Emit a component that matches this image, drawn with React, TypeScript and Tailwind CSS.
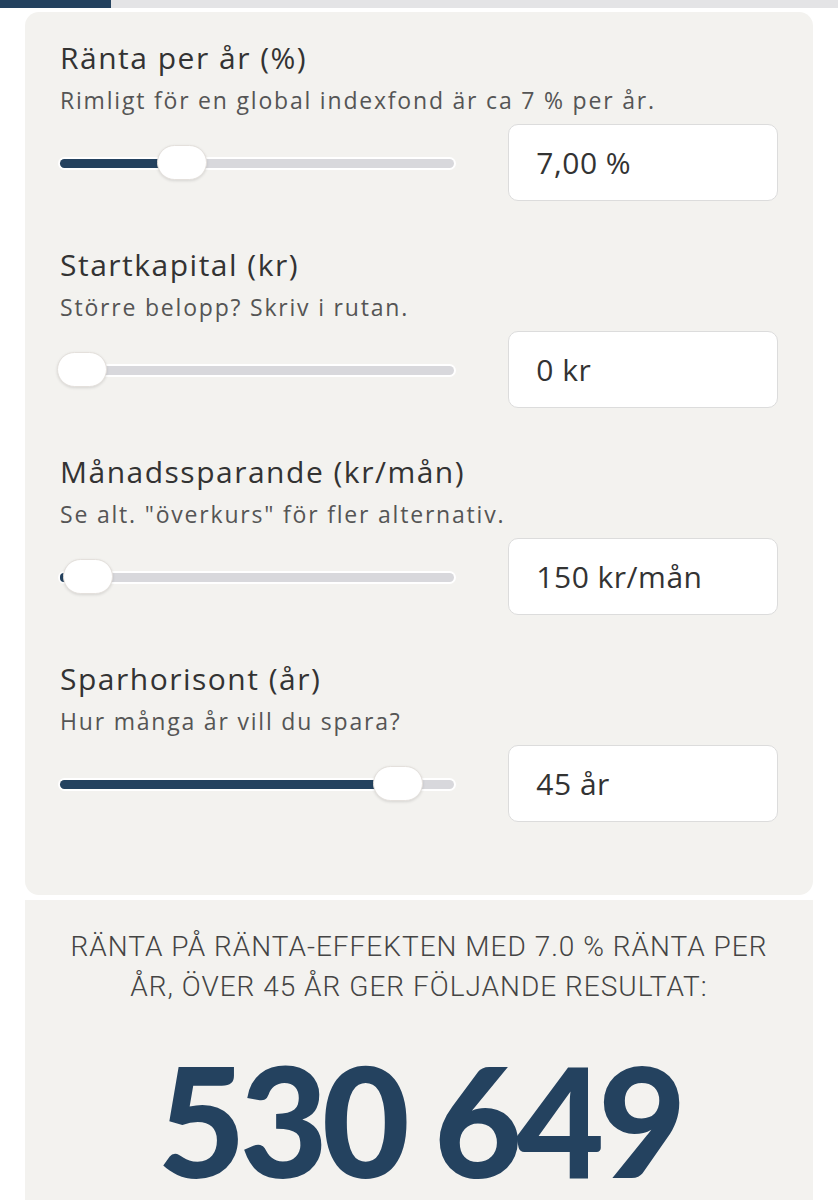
const sections = [
  { title: "Ränta per år (%)", hint: "Rimligt för en global indexfond är ca 7 % per år.", value: "7,00 %", fill: 105, thumb: 97 },
  { title: "Startkapital (kr)", hint: "Större belopp? Skriv i rutan.", value: "0 kr", fill: 0, thumb: -3 },
  { title: "Månadssparande (kr/mån)", hint: "Se alt. \"överkurs\" för fler alternativ.", value: "150 kr/mån", fill: 8, thumb: 3 },
  { title: "Sparhorisont (år)", hint: "Hur många år vill du spara?", value: "45 år", fill: 325, thumb: 313 },
];

function Slider({ fill, thumb }: { fill: number; thumb: number }) {
  return (
    <div className="relative h-[36px] w-[395px]">
      <div className="absolute left-0 right-0 top-[14px] h-[9px] rounded-full bg-[#d8d8dc] ring-2 ring-white" />
      <div className="absolute left-0 top-[14px] h-[9px] rounded-full bg-[#24425f]" style={{ width: fill }} />
      <div
        className="absolute top-0 h-[35px] w-[50px] rounded-[18px] border border-[#e4e0dc] bg-white shadow-[0_1px_3px_rgba(0,0,0,0.12)]"
        style={{ left: thumb }}
      />
    </div>
  );
}

export default function App() {
  return (
    <div className="min-h-screen bg-white font-['Open_Sans','Noto_Sans',sans-serif] text-[#333]">
      <div className="flex h-[8px] w-full bg-[#e4e4e6]">
        <div className="h-full w-[111px] bg-[#24425f]" />
      </div>

      <div className="mx-[25px] mt-[4px] rounded-[14px] bg-[#f3f2ef] px-[35px] pb-[73px] pt-[28px]">
        <div className="flex flex-col gap-[46px]">
          {sections.map((s) => (
            <div key={s.title}>
              <h2 className="text-[30px] leading-[36px] tracking-[1.5px] text-[#333]">{s.title}</h2>
              <p className="mt-[10px] text-[23px] leading-[28px] tracking-[1.8px] text-[#555]">{s.hint}</p>
              <div className="mt-[10px] flex items-center gap-[54px]">
                <Slider fill={s.fill} thumb={s.thumb} />
                <div className="flex h-[77px] w-[270px] items-center rounded-[10px] border border-[#dcdcdc] bg-white px-[27px] text-[30px] tracking-[0.5px] text-[#333]">
                  {s.value}
                </div>
              </div>
            </div>
          ))}
        </div>
      </div>

      <div className="mx-[25px] mt-[5px] bg-[#f3f2ef] px-[40px] pb-[20px] pt-[27px] text-center">
        <p className="font-['Roboto','Noto_Sans',sans-serif] text-[28px] font-light uppercase leading-[40px] tracking-[1px] text-[#444]">
          Ränta på ränta-effekten med 7.0 % ränta per år, över 45 år ger följande resultat:
        </p>
        <div className="mt-[42px] font-['Lato','Noto_Sans',sans-serif] text-[152px] font-black leading-[140px] tracking-[-6px] text-[#24425f]">
          530 649
        </div>
      </div>
    </div>
  );
}
